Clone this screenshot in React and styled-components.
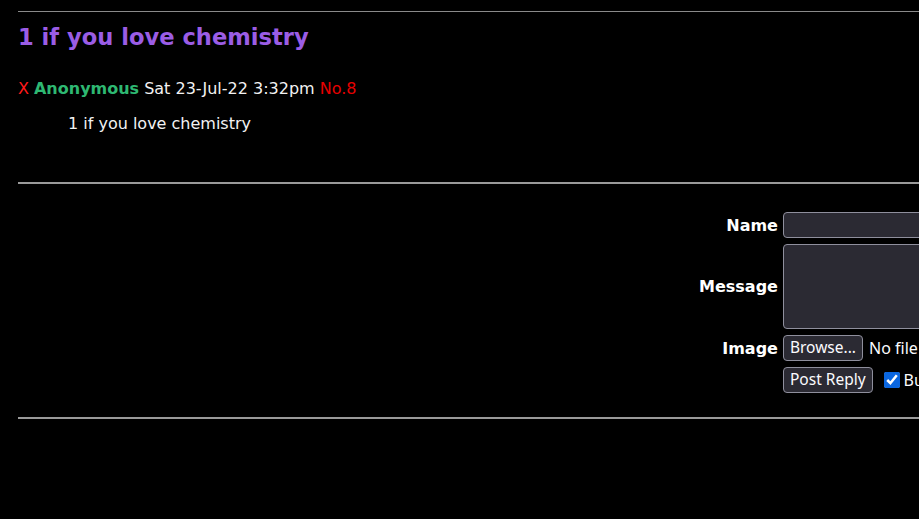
import React from "react";
import styled, { createGlobalStyle } from "styled-components";

const GlobalStyle = createGlobalStyle`
  html, body {
    margin: 0;
    padding: 0;
    background: #000;
    overflow: hidden;
  }
  body {
    font-family: "DejaVu Sans", Verdana, sans-serif;
    color: #eeeeee;
  }
`;

const Page = styled.div`
  width: 1730px;
  padding: 11px 0 0 18px;
`;

const Rule = styled.hr`
  border: none;
  height: ${(p) => p.$thick || 1}px;
  background: ${(p) => p.$color || "#8a8a8a"};
  margin: ${(p) => p.$margin || "0"};
`;

const Title = styled.h1`
  margin: 11px 0 0;
  font-size: 22.6px;
  line-height: 28px;
  font-weight: bold;
  color: #9b5de5;
`;

const Post = styled.div`
  margin-top: 28px;
`;

const Meta = styled.div`
  font-size: 16px;
  line-height: 20px;
  display: flex;
  gap: 5px;
`;

const Delete = styled.span`
  color: #ff1a1a;
`;

const Author = styled.span`
  color: #2eb872;
  font-weight: bold;
`;

const Stamp = styled.span`
  color: #f2f2f2;
`;

const PostNo = styled.span`
  color: #e60000;
`;

const Body = styled.p`
  margin: 15px 0 0 50px;
  font-size: 16px;
  line-height: 20px;
  color: #f2f2f2;
`;

const Form = styled.form`
  display: flex;
  justify-content: center;
  padding: 28px 0 24px;
`;

const Grid = styled.div`
  display: grid;
  grid-template-columns: auto 284px;
  column-gap: 5px;
  row-gap: 6px;
  align-items: center;
`;

const Label = styled.label`
  font-weight: bold;
  font-size: 16px;
  text-align: right;
  color: #fff;
`;

const TextInput = styled.input`
  box-sizing: border-box;
  width: 100%;
  height: 26px;
  background: #2b2a33;
  border: 1px solid #8f8f9d;
  border-radius: 4px;
  color: #fff;
`;

const TextArea = styled.textarea`
  box-sizing: border-box;
  width: 100%;
  height: 85px;
  background: #2b2a33;
  border: 1px solid #8f8f9d;
  border-radius: 4px;
  resize: none;
  display: block;
`;

const Row = styled.div`
  display: flex;
  align-items: center;
  gap: ${(p) => p.$gap || 6}px;
  font-family: "Noto Sans", sans-serif;
  font-size: 16px;
  color: #fbfbfe;
  white-space: nowrap;
`;

const Button = styled.button`
  font-family: "Noto Sans", sans-serif;
  font-size: 15.5px;
  height: 26px;
  padding: 0 6px;
  background: #2b2a33;
  color: #fbfbfe;
  border: 1px solid #8f8f9d;
  border-radius: 4px;
  line-height: 1;
`;

const Check = styled.input`
  width: 16px;
  height: 16px;
  margin: 0;
  accent-color: #0a66e0;
`;

export default function App() {
  return (
    <>
      <GlobalStyle />
      <Page>
        <Rule />
        <Title>1 if you love chemistry</Title>
        <Post>
          <Meta>
            <Delete>X</Delete>
            <Author>Anonymous</Author>
            <Stamp>Sat 23-Jul-22 3:32pm</Stamp>
            <PostNo>No.8</PostNo>
          </Meta>
          <Body>1 if you love chemistry</Body>
        </Post>
        <Rule $thick={2} $color="#9a9a9a" $margin="48px 0 0" />
        <Form>
          <Grid>
            <Label>Name</Label>
            <TextInput type="text" />
            <Label>Message</Label>
            <TextArea />
            <Label>Image</Label>
            <Row>
              <Button type="button">Browse...</Button>
              <span>No file selected.</span>
            </Row>
            <span />
            <Row $gap={11}>
              <Button type="button">Post Reply</Button>
              <Row $gap={4}>
                <Check type="checkbox" defaultChecked />
                <span>Bump</span>
              </Row>
            </Row>
          </Grid>
        </Form>
        <Rule $thick={2} $color="#9a9a9a" />
      </Page>
    </>
  );
}
